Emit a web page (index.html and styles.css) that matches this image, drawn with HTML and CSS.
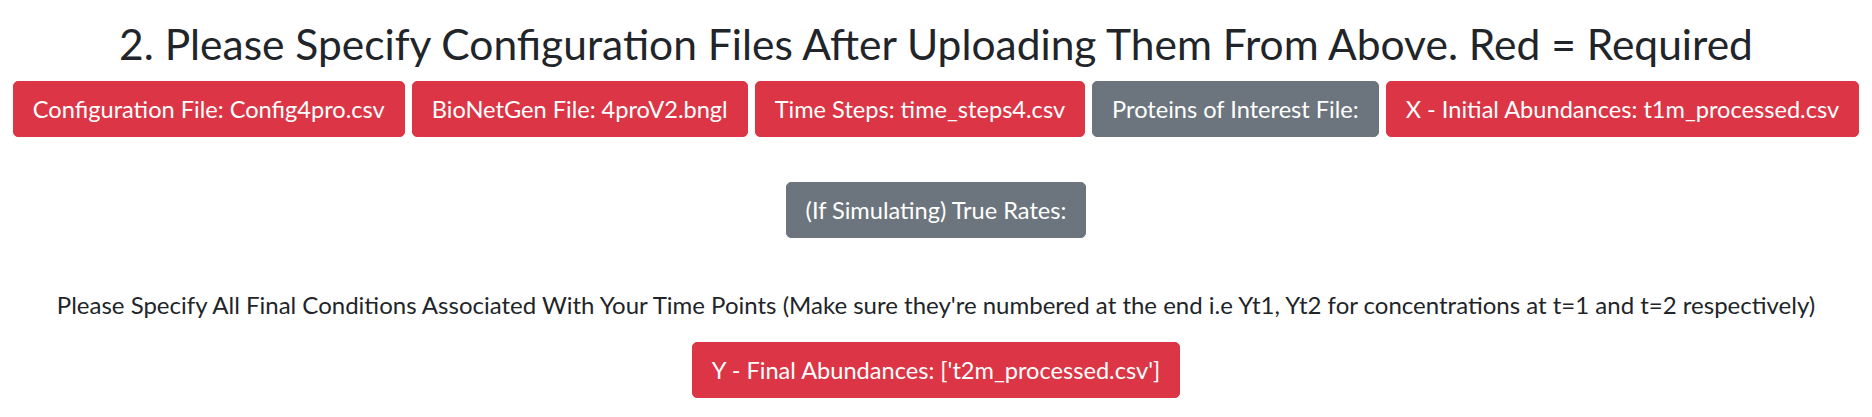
FILE: index.html
```html
<!DOCTYPE html>
<html>
<head>
<meta charset="utf-8">
<link rel="stylesheet" href="styles.css">
</head>
<body>
<div class="page">
  <h1 class="title">2. Please Specify Configuration Files After Uploading Them From Above. Red = Required</h1>
  <div class="row">
    <button class="btn btn-red">Configuration File: Config4pro.csv</button>
    <button class="btn btn-red">BioNetGen File: 4proV2.bngl</button>
    <button class="btn btn-red">Time Steps: time_steps4.csv</button>
    <button class="btn btn-gray">Proteins of Interest File:</button>
    <button class="btn btn-red">X - Initial Abundances: t1m_processed.csv</button>
  </div>
  <div class="row row-rates">
    <button class="btn btn-gray">(If Simulating) True Rates:</button>
  </div>
  <p class="note">Please Specify All Final Conditions Associated With Your Time Points (Make sure they're numbered at the end i.e Yt1, Yt2 for concentrations at t=1 and t=2 respectively)</p>
  <div class="row">
    <button class="btn btn-red">Y - Final Abundances: ['t2m_processed.csv']</button>
  </div>
</div>
</body>
</html>
```
FILE: styles.css
```css
html, body {
  margin: 0;
  padding: 0;
  background: #ffffff;
}
body {
  font-family: Lato, "Noto Sans", sans-serif;
  color: #212529;
}
.page {
  display: flex;
  flex-direction: column;
  align-items: center;
  padding-top: 19px;
}
.title {
  margin: 0 0 13px 0;
  font-size: 42.5px;
  line-height: 49px;
  font-weight: 400;
  text-align: center;
}
.row {
  display: flex;
  justify-content: center;
  gap: 7px;
}
.row-rates {
  margin-top: 45px;
}
.btn {
  font-family: inherit;
  font-size: 23.6px;
  line-height: 30px;
  padding: 12px 19px;
  border: 1px solid transparent;
  border-radius: 5px;
  color: #ffffff;
  cursor: pointer;
}
.btn-red {
  background: #dc3545;
  border-color: #dc3545;
}
.btn-gray {
  background: #6c757d;
  border-color: #6c757d;
}
.note {
  margin: 52px 0 22px 0;
  font-size: 24px;
  line-height: 30px;
  text-align: center;
}
```
